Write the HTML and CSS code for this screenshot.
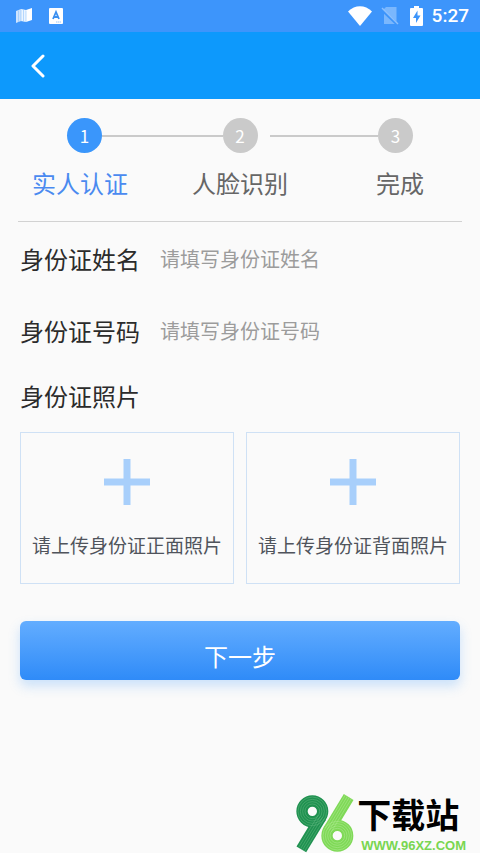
FILE: index.html
```html
<!DOCTYPE html>
<html lang="zh-CN">
<head>
<meta charset="utf-8">
<meta name="viewport" content="width=device-width, initial-scale=1">
<title>实人认证</title>
<link rel="stylesheet" href="styles.css">
</head>
<body>
<div class="statusbar">
  <div class="status-group status-left">
    <svg width="16" height="16" viewBox="0 0 16 16" aria-hidden="true">
      <path d="M0 3 5 1v12l-5 2z" fill="#fff" opacity=".75"/>
      <path d="M5 1l5 1v12l-5-1z" fill="#fff" opacity=".9"/>
      <path d="M10 2l6-2v12l-6 2z" fill="#fff"/>
      <path d="M2.500 2.500v11.500M5 1.500v12M7.500 2v11.500M10 2.500v11.500" stroke="#8fc2fc" stroke-width=".6"/>
    </svg>
    <svg width="14" height="16" viewBox="0 0 14 16" aria-hidden="true">
      <rect width="14" height="16" rx="1" fill="#fff"/>
      <path d="M4 11 7 4l3 7M5 9h4" fill="none" stroke="#3b8ff0" stroke-width="1.800"/>
      <path d="M7 14h5" stroke="#9cc6f8" stroke-dasharray="1.500 .5"/>
    </svg>
  </div>
  <div class="status-group">
    <svg class="wifi" width="24" height="20" viewBox="0 0 24 20" aria-hidden="true">
      <path d="M0 5.500C7-1.500 17-1.500 24 5.500L12 20z" fill="#fff"/>
    </svg>
    <svg class="sim" width="18" height="20" viewBox="0 0 18 20" aria-hidden="true">
      <path d="M5 1h10.500v17H3V3z" fill="#7ab7fd"/>
      <path d="M0 3l17 16" stroke="#3d95fb" stroke-width="3"/>
      <path d="M1 2l16 16" stroke="#8cc0fd" stroke-width="1.500"/>
    </svg>
    <svg class="battery" width="13" height="20" viewBox="0 0 13 20" aria-hidden="true">
      <path d="M4 0h5v2h3q1 0 1 1v16q0 1-1 1H1q-1 0-1-1V3q0-1 1-1h3z" fill="#fff"/>
      <path d="M7.500 4.500 3 12h3v5l4.500-7.500h-3z" fill="#3d95fb"/>
    </svg>
    <time class="clock">5:27</time>
  </div>
</div>

<header class="navbar">
  <button class="back" type="button" aria-label="返回">
    <svg width="16" height="24" viewBox="0 0 16 24" aria-hidden="true">
      <path d="M13 2 3 12l10 10" fill="none" stroke="#fff" stroke-width="3" stroke-linecap="round" stroke-linejoin="round"/>
    </svg>
  </button>
</header>

<main class="content">
  <section class="steps">
    <div class="track">
      <span class="dot dot-active">1</span>
      <span class="line"></span>
      <span class="dot">2</span>
      <span class="line line-next"></span>
      <span class="dot">3</span>
    </div>
    <div class="step-names">
      <span class="step-active">实人认证</span>
      <span>人脸识别</span>
      <span>完成</span>
    </div>
  </section>

  <form class="form">
    <div class="field">
      <label for="name">身份证姓名</label>
      <input id="name" type="text" placeholder="请填写身份证姓名">
    </div>
    <div class="field">
      <label for="number">身份证号码</label>
      <input id="number" type="text" placeholder="请填写身份证号码">
    </div>
    <h2 class="photo-title">身份证照片</h2>
    <div class="uploads">
      <button class="upload" type="button">
        <svg width="46" height="46" viewBox="0 0 46 46" aria-hidden="true"><path d="M23 0v46M0 23h46" stroke="#a8cffb" stroke-width="7"/></svg>
        <span>请上传身份证正面照片</span>
      </button>
      <button class="upload" type="button">
        <svg width="46" height="46" viewBox="0 0 46 46" aria-hidden="true"><path d="M23 0v46M0 23h46" stroke="#a8cffb" stroke-width="7"/></svg>
        <span>请上传身份证背面照片</span>
      </button>
    </div>
    <button class="next" type="submit">下一步</button>
  </form>
</main>

<footer class="brand">
  <svg width="58" height="59" viewBox="48 40 174 177" aria-hidden="true">
    <g fill="none" stroke="#1f9150" stroke-width="34">
      <circle cx="97" cy="92" r="31"/>
      <path d="M123 109 64 206"/>
    </g>
    <g fill="none" stroke="#65b983" stroke-width="1.500">
      <circle cx="97" cy="92" r="22"/><circle cx="97" cy="92" r="29"/><circle cx="97" cy="92" r="36"/><circle cx="97" cy="92" r="43"/>
      <path d="M133 114 74 211M127 110 68 207M121 107 62 204M115 103 56 200"/>
    </g>
    <g fill="none" stroke="#7fd957" stroke-width="34">
      <circle cx="172" cy="165" r="31"/>
      <path d="M146 148 206 49"/>
    </g>
    <g fill="none" stroke="#b2eb98" stroke-width="1.500">
      <circle cx="172" cy="165" r="22"/><circle cx="172" cy="165" r="29"/><circle cx="172" cy="165" r="36"/><circle cx="172" cy="165" r="43"/>
      <path d="M136 142 196 43M142 146 202 47M148 149 208 50M154 153 214 54"/>
    </g>
  </svg>
  <div class="brand-text">
    <strong>下载站</strong>
    <span>WWW.96XZ.COM</span>
  </div>
</footer>
</body>
</html>
```

FILE: styles.css
```css
* {
  box-sizing: border-box;
}

body {
  margin: 0;
  min-height: 100vh;
  display: flex;
  flex-direction: column;
  background: #fafafa;
  color: #2b2b2b;
  font-family: "Noto Sans CJK SC", sans-serif;
}

button,
input {
  margin: 0;
  padding: 0;
  border: 0;
  background: none;
  font: inherit;
  color: inherit;
}

svg {
  display: block;
  flex: none;
}

.statusbar {
  display: flex;
  justify-content: space-between;
  align-items: center;
  height: 32px;
  padding: 0 11px 0 16px;
  background: #3d95fb;
}

.status-group {
  display: flex;
  align-items: center;
}

.status-left {
  gap: 17px;
}

.sim {
  margin-left: 9px;
}

.battery {
  margin: 0 9px 0 11px;
}

.clock {
  color: #fff;
  font: 500 19px/32px Roboto, sans-serif;
}

.navbar {
  display: flex;
  align-items: center;
  height: 67px;
  padding-left: 20px;
  background: #0d99fc;
}

.back {
  padding: 8px 10px;
}

.content {
  padding: 0 20px;
}

.steps {
  margin: 0 -2px;
  padding: 19px 0 20px;
  border-bottom: 1px solid #d2d2d2;
}

.track {
  display: flex;
  align-items: center;
  padding: 0 49px;
}

.dot {
  width: 35px;
  height: 35px;
  border-radius: 50%;
  background: #cacaca;
  color: #fff;
  font-size: 17px;
  line-height: 35px;
  text-align: center;
}

.dot-active {
  background: #3a96fb;
}

.line {
  flex: 1 1 12px;
  height: 2px;
  background: #cacaca;
}

.line-next {
  border-left: 12px solid #fafafa;
}

.step-names {
  display: grid;
  grid-template-columns: repeat(3, 1fr);
  margin: 12px -18px 0;
  color: #666;
  font-size: 24px;
  line-height: 36px;
  text-align: center;
}

.step-active {
  color: #4a8af0;
}

.field {
  display: flex;
  align-items: center;
  height: 72px;
  font-size: 24px;
}

.field label {
  width: 140px;
}

.field input {
  flex: 1;
  min-width: 0;
  font-size: 20px;
  outline: 0;
}

.field input::placeholder {
  color: #9c9c9c;
  opacity: 1;
}

.photo-title {
  margin: 12px 0 18px;
  font-size: 24px;
  font-weight: 400;
  line-height: 36px;
}

.uploads {
  display: grid;
  grid-template-columns: 1fr 1fr;
  gap: 12px;
}

.upload {
  display: flex;
  flex-direction: column;
  align-items: center;
  gap: 26px;
  padding: 26px 0 24px;
  border: 1px solid #cfe1f5;
  color: #50545c;
  font-size: 19px;
  line-height: 28px;
  white-space: nowrap;
}

.next {
  width: 100%;
  height: 59px;
  margin-top: 37px;
  padding-top: 10px;
  border-radius: 6px;
  background: linear-gradient(#63adff, #2f8bf8);
  box-shadow: 0 6px 12px #3a96fb40;
  color: #fff;
  font-size: 24px;
  line-height: 36px;
}

.brand {
  display: flex;
  align-items: flex-start;
  justify-content: flex-end;
  gap: 3px;
  margin-top: auto;
  padding-right: 14px;
}

.brand-text {
  display: flex;
  flex-direction: column;
  color: #000;
}

.brand-text strong {
  font-size: 34px;
  font-weight: 700;
  line-height: 40px;
}

.brand-text span {
  margin-top: 4px;
  padding-left: 4px;
  color: #79d651;
  font: bold 13px/15px "Liberation Sans", sans-serif;
}
```
